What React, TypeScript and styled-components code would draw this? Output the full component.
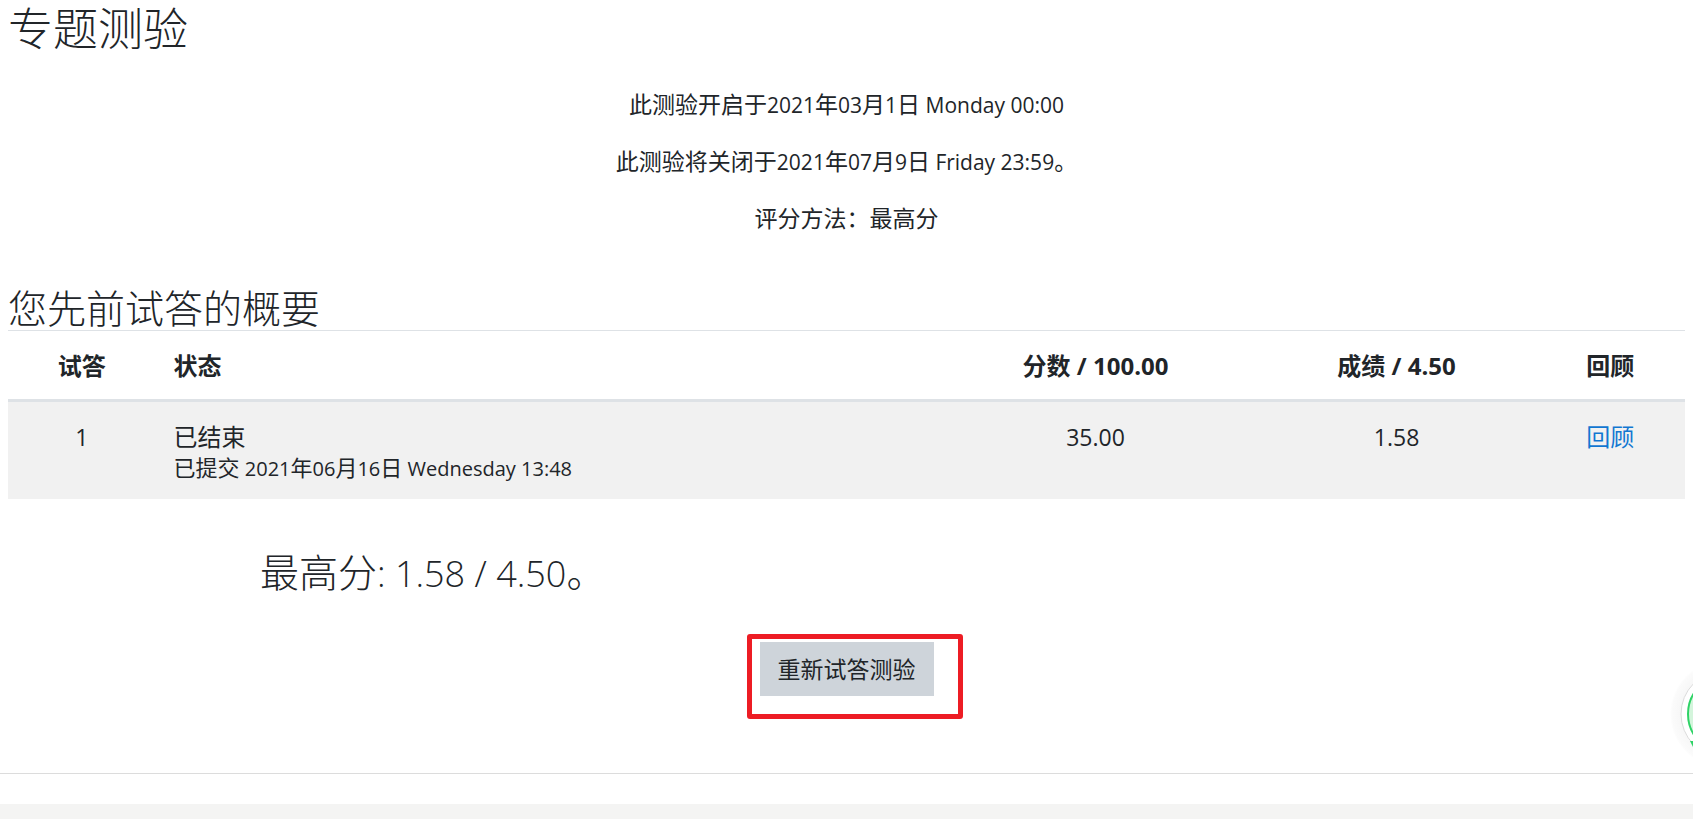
import React from "react";
import styled, { createGlobalStyle } from "styled-components";

const Global = createGlobalStyle`
  *, *::before, *::after { box-sizing: border-box; }
  body {
    margin: 0;
    background: #fff;
    color: #212529;
    font-family: "Open Sans", "Noto Sans CJK SC", sans-serif;
    font-size: 23px;
    line-height: 33px;
    overflow-x: hidden;
  }
`;

const Main = styled.main`
  padding: 0 8px 77px;
  border-bottom: 1px solid #dcdcdc;
`;

const Title = styled.h1`
  margin: 0 0 30px;
  font-size: 45px;
  line-height: 58px;
  font-weight: 300;
`;

const Info = styled.section`
  display: flex;
  flex-direction: column;
  align-items: center;
  gap: 24px;
  margin-bottom: 50px;
`;

const InfoLine = styled.p`
  margin: 0;
  height: 33px;
`;

const Latin = styled.span<{ $size: number }>`
  font-size: ${(p) => p.$size}px;
`;

const SectionTitle = styled.h3<{ $indented?: boolean }>`
  margin: 0;
  height: 45px;
  padding-left: ${(p) => (p.$indented ? "252px" : "0")};
  font-size: 39px;
  line-height: 45px;
  font-weight: 300;
`;

const Attempts = styled.table`
  width: 100%;
  margin-bottom: 50px;
  border-collapse: collapse;
  table-layout: fixed;
  font-size: 24px;
  line-height: 33px;
`;

const HeadCell = styled.th<{ $width: string; $left?: boolean }>`
  width: ${(p) => p.$width};
  padding: 18px 18px 17px;
  border-top: 1px solid #dee2e6;
  border-bottom: 3px solid #dee2e6;
  text-align: ${(p) => (p.$left ? "left" : "center")};
  font-weight: 700;
`;

const Cell = styled.td<{ $left?: boolean }>`
  padding: 18px;
  background: #f1f1f1;
  text-align: ${(p) => (p.$left ? "left" : "center")};
  vertical-align: top;
`;

const Submitted = styled.span`
  display: block;
  height: 28px;
  font-size: 22px;
  line-height: 28px;
`;

const ReviewLink = styled.a`
  color: #1177d1;
  text-decoration: none;
`;

const Actions = styled.div`
  display: flex;
  justify-content: center;
  margin-top: 48px;
`;

const Highlighted = styled.div`
  position: relative;

  &::after {
    content: "";
    position: absolute;
    inset: -8px -29px -23px -13px;
    border: 5px solid #ed1c24;
    border-radius: 3px;
    pointer-events: none;
  }
`;

const RetryButton = styled.button`
  display: block;
  height: 54px;
  padding: 0 18px;
  border: 0;
  background: #ced4da;
  color: #212529;
  font: inherit;
`;

const Footer = styled.footer`
  height: 15px;
  margin-top: 30px;
  background: #f4f4f3;
`;

const FloatingBadge = styled.svg`
  position: fixed;
  bottom: 51px;
  right: 0;
  width: 24px;
  height: 104px;
`;

export default function App() {
  return (
    <>
      <Global />
      <Main>
        <Title>专题测验</Title>
        <Info>
          <InfoLine>
            此测验开启于<Latin $size={21}>2021</Latin>年<Latin $size={21}>03</Latin>月
            <Latin $size={21}>1</Latin>日<Latin $size={21}> Monday 00:00</Latin>
          </InfoLine>
          <InfoLine>
            此测验将关闭于<Latin $size={21}>2021</Latin>年<Latin $size={21}>07</Latin>月
            <Latin $size={21}>9</Latin>日<Latin $size={21}> Friday 23:59</Latin>。
          </InfoLine>
          <InfoLine>评分方法：最高分</InfoLine>
        </Info>
        <SectionTitle>您先前试答的概要</SectionTitle>
        <Attempts>
          <thead>
            <tr>
              <HeadCell scope="col" $width="8.8%">试答</HeadCell>
              <HeadCell scope="col" $width="46.4%" $left>状态</HeadCell>
              <HeadCell scope="col" $width="19.3%">分数 / 100.00</HeadCell>
              <HeadCell scope="col" $width="16.6%">成绩 / 4.50</HeadCell>
              <HeadCell scope="col" $width="8.9%">回顾</HeadCell>
            </tr>
          </thead>
          <tbody>
            <tr>
              <Cell><Latin $size={23}>1</Latin></Cell>
              <Cell $left>
                已结束
                <Submitted>
                  已提交<Latin $size={20}> 2021</Latin>年<Latin $size={20}>06</Latin>月
                  <Latin $size={20}>16</Latin>日<Latin $size={20}> Wednesday 13:48</Latin>
                </Submitted>
              </Cell>
              <Cell><Latin $size={23}>35.00</Latin></Cell>
              <Cell><Latin $size={23}>1.58</Latin></Cell>
              <Cell><ReviewLink href="#review">回顾</ReviewLink></Cell>
            </tr>
          </tbody>
        </Attempts>
        <SectionTitle $indented>
          最高分<Latin $size={36}>: 1.58 / 4.50</Latin>。
        </SectionTitle>
        <Actions>
          <Highlighted>
            <RetryButton type="button">重新试答测验</RetryButton>
          </Highlighted>
        </Actions>
      </Main>
      <Footer />
      <FloatingBadge viewBox="0 0 24 104" aria-hidden="true">
        <defs>
          <radialGradient id="halo" gradientUnits="userSpaceOnUse" cx="55" cy="50" r="54">
            <stop offset="0.8" stopColor="#f7f7f7" />
            <stop offset="0.96" stopColor="#fbfbfb" />
            <stop offset="1" stopColor="#ffffff" />
          </radialGradient>
        </defs>
        <circle cx="55" cy="50" r="54" fill="url(#halo)" />
        <circle cx="55" cy="50" r="43" fill="#fff" stroke="#dcdcdc" />
        <circle cx="58" cy="50" r="39" fill="#d4f5dc" stroke="#2fd366" strokeWidth="2" />
        <path d="M21 77h3v6z" fill="#2fd366" />
      </FloatingBadge>
    </>
  );
}
